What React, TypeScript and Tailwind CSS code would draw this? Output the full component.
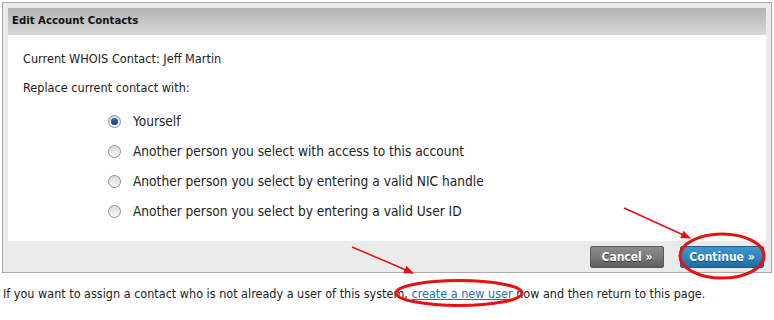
import React from "react";

const options = [
  "Yourself",
  "Another person you select with access to this account",
  "Another person you select by entering a valid NIC handle",
  "Another person you select by entering a valid User ID",
];

const Radio: React.FC<{ checked?: boolean }> = ({ checked }) => (
  <span className="w-[13px] h-[13px] rounded-full border border-[#8f8f8f] bg-gradient-to-b from-[#d8d8d8] to-[#fbfbfb] flex items-center justify-center shrink-0">
    {checked && <span className="w-[7px] h-[7px] rounded-full bg-gradient-to-b from-[#2d6fb0] to-[#0b3f82]" />}
  </span>
);

export default function App() {
  return (
    <div className="relative w-[774px] h-[320px] bg-white text-[#222] font-['DejaVu_Sans_Condensed','DejaVu_Sans',sans-serif] overflow-hidden">
      <div className="mt-[2px] mx-[2px] border border-[#a9a9a9] bg-[#ebebeb] px-[5px] pt-[5px]">
        <div className="h-[27px] flex items-center pl-[4px] bg-gradient-to-b from-[#b3b3b3] to-[#d8d8d8] text-[11.3px] font-bold text-[#111]">
          Edit Account Contacts
        </div>
        <div className="bg-white h-[206px] pt-[16px] pl-[15px] text-[12.6px]">
          <div className="h-[16px] leading-[16px]">Current WHOIS Contact: Jeff Martin</div>
          <div className="h-[16px] leading-[16px] mt-[13px]">Replace current contact with:</div>
          <div className="mt-[10px] pl-[85px]">
            {options.map((o, i) => (
              <div key={o} className="h-[30px] flex items-center gap-[12px] text-[13.6px]">
                <Radio checked={i === 0} />
                <span>{o}</span>
              </div>
            ))}
          </div>
        </div>
        <div className="h-[31px] flex items-center justify-end gap-[16px] pr-[2px]">
          <button className="w-[74px] h-[22px] rounded-[2px] border border-[#5a5a5a] bg-gradient-to-b from-[#8c8c8c] via-[#7a7a7a] to-[#5c5c5c] text-white text-[12px] font-bold [text-shadow:0_1px_0_#333]">
            Cancel »
          </button>
          <button className="w-[84px] h-[22px] rounded-[2px] border border-[#1f5f8e] bg-gradient-to-b from-[#3c97cf] via-[#2f86bf] to-[#1c6ca3] text-white text-[12px] font-bold [text-shadow:0_1px_0_#134a70]">
            Continue »
          </button>
        </div>
      </div>
      <p className="mt-[13px] ml-[3px] text-[12.5px] leading-[16px]">
        If you want to assign a contact who is not already a user of this system,{" "}
        <a className="text-[#1c72b0] underline">create a new user</a> now and then return to this page.
      </p>
      <svg className="absolute inset-0 pointer-events-none" width="774" height="320">
        <defs>
          <marker id="ah" markerWidth="10" markerHeight="8" refX="9" refY="4" orient="auto" markerUnits="userSpaceOnUse">
            <path d="M0,0 L10,4 L0,8 Z" fill="#e81010" />
          </marker>
        </defs>
        <line x1="624" y1="208" x2="690" y2="238" stroke="#e81010" strokeWidth="1.5" markerEnd="url(#ah)" />
        <ellipse cx="722" cy="256" rx="42" ry="22" fill="none" stroke="#e81010" strokeWidth="3" />
        <line x1="352" y1="247" x2="413" y2="273" stroke="#e81010" strokeWidth="1.5" markerEnd="url(#ah)" />
        <ellipse cx="459" cy="293" rx="63" ry="12.5" fill="none" stroke="#e81010" strokeWidth="3" />
      </svg>
    </div>
  );
}
